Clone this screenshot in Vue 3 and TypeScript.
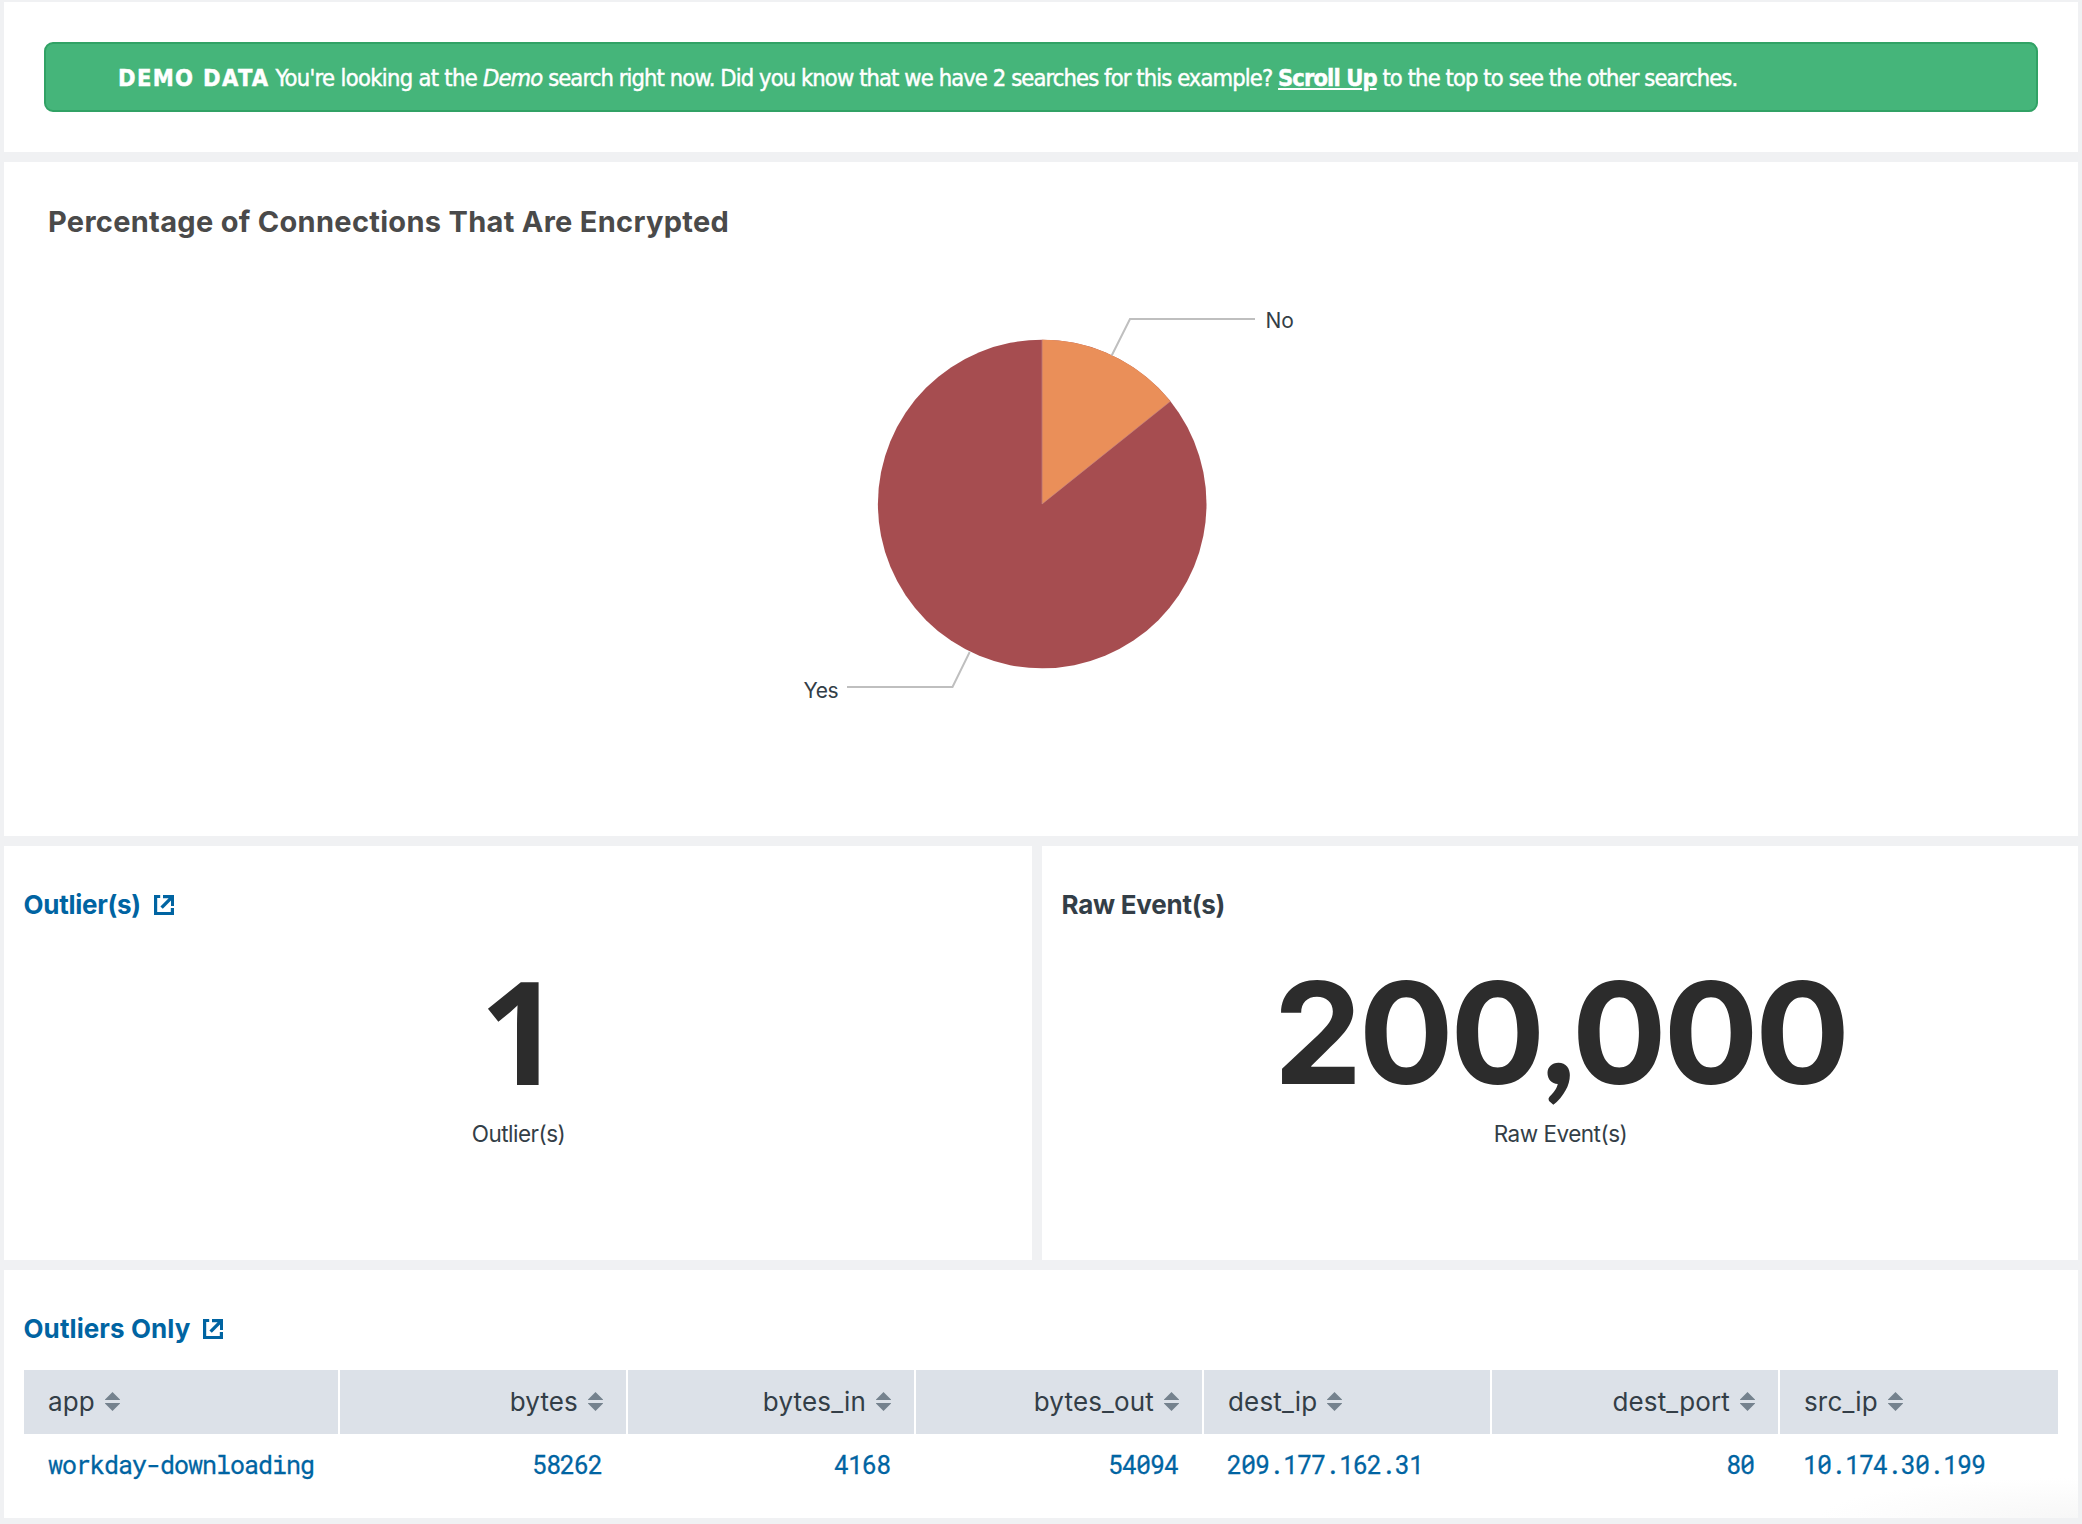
<script setup lang="ts">
interface Column {
  name: string
  value: string
  width: number
  numeric: boolean
}

const columns: Column[] = [
  { name: 'app', value: 'workday-downloading', width: 316, numeric: false },
  { name: 'bytes', value: '58262', width: 288, numeric: true },
  { name: 'bytes_in', value: '4168', width: 288, numeric: true },
  { name: 'bytes_out', value: '54094', width: 288, numeric: true },
  { name: 'dest_ip', value: '209.177.162.31', width: 288, numeric: false },
  { name: 'dest_port', value: '80', width: 288, numeric: true },
  { name: 'src_ip', value: '10.174.30.199', width: 278, numeric: false },
]
</script>

<template>
  <main class="dashboard">
    <section class="panel banner-panel">
      <div class="banner">
        <p class="banner-text"><strong class="tag">DEMO DATA</strong> <span class="lead">You're looking at the </span><em>Demo</em> <span class="body">search right now. Did you know that we have 2 searches for this example? </span><a class="scroll">Scroll Up</a><span class="body"> to the top to see the other searches.</span></p>
      </div>
    </section>

    <section class="panel chart-panel">
      <h2 class="chart-title">Percentage of Connections That Are Encrypted</h2>
      <svg class="pie" viewBox="4 262 2074 574">
        <circle cx="1042.2" cy="504" r="164.3" fill="#a64d50" />
        <path d="M1042.2 504V339.7A164.3 164.3 0 0 1 1170.4 401.3Z" fill="#ea8f59" />
        <path d="M1042 340V504L1170.4 401.3" fill="none" stroke="#c58a8c" stroke-width="0.6" />
        <path d="M1111.7 355.5L1130 319H1255M969.7 652L952.5 687H847" fill="none" stroke="#bfbfbf" stroke-width="2" />
        <text x="1265.5" y="328">No</text>
        <text x="803.5" y="698" letter-spacing="-0.5">Yes</text>
      </svg>
    </section>

    <div class="row">
      <section class="panel single outliers">
        <h3 class="heading link">
          <span class="t-outliers">Outlier(s)</span>
          <svg class="ext" viewBox="0 0 20 20"><path d="M6.2 0H0V20H20V13H16.8V17H3.2V3H6.2ZM9 0H20V11H17V5.6L8.8 13.8L6.4 11.4L14.6 3.2H9Z" /></svg>
        </h3>
        <div class="number one">1</div>
        <div class="caption">Outlier(s)</div>
      </section>
      <section class="panel single events">
        <h3 class="heading"><span class="t-raw">Raw Event(s)</span></h3>
        <div class="number">200<span class="comma">,</span>000</div>
        <div class="caption">Raw Event(s)</div>
      </section>
    </div>

    <section class="panel table-panel">
      <h3 class="heading link">
        <span class="t-only">Outliers Only</span>
        <svg class="ext" viewBox="0 0 20 20"><path d="M6.2 0H0V20H20V13H16.8V17H3.2V3H6.2ZM9 0H20V11H17V5.6L8.8 13.8L6.4 11.4L14.6 3.2H9Z" /></svg>
      </h3>
      <table class="results">
        <colgroup>
          <col v-for="c in columns" :key="c.name" :style="{ width: c.width + 'px' }" />
        </colgroup>
        <thead>
          <tr>
            <th v-for="c in columns" :key="c.name" :class="{ numeric: c.numeric }">
              <div class="th">
                <span class="name">{{ c.name }}</span>
                <svg class="sort" viewBox="0 0 15 19"><path d="M7.5 0L15 7.5V8H0V7.5ZM0 11H15V11.5L7.5 19L0 11.5Z" /></svg>
              </div>
            </th>
          </tr>
        </thead>
        <tbody>
          <tr>
            <td v-for="c in columns" :key="c.name" :class="{ numeric: c.numeric }">{{ c.value }}</td>
          </tr>
        </tbody>
      </table>
    </section>
  </main>
</template>

<style>
body {
  background: #f0f1f3;
}
</style>

<style scoped>
.dashboard {
  box-sizing: border-box;
  width: 2082px;
  height: 1524px;
  padding: 2px 4px 6px;
  display: flex;
  flex-direction: column;
  gap: 10px;
  overflow: hidden;
  background: #f0f1f3;
  font-family: Inter, Roboto, sans-serif;
  color: #333e47;
}

.panel {
  box-sizing: border-box;
  background: #fff;
}

.banner-panel {
  height: 150px;
  padding: 40px;
}

.banner {
  box-sizing: border-box;
  height: 70px;
  padding: 0 72px;
  border: 2px solid #31a265;
  border-radius: 9px;
  background: #45b57a;
}

.banner-text {
  margin: 0;
  font: 23.5px/68px 'DejaVu Sans Condensed', 'DejaVu Sans', sans-serif;
  letter-spacing: -0.89px;
  white-space: pre;
  color: #fff;
  -webkit-text-stroke: 0.45px #fff;
}

.tag {
  letter-spacing: 1.35px;
}

.lead {
  letter-spacing: -0.68px;
}

.scroll {
  font-weight: 700;
  letter-spacing: -0.92px;
  text-decoration: underline;
  text-decoration-thickness: 2px;
  text-underline-offset: 2px;
}

.chart-panel {
  height: 674px;
}

.chart-title {
  box-sizing: border-box;
  height: 100px;
  margin: 0;
  padding: 40px 44px 0;
  font-size: 29px;
  line-height: 40px;
  letter-spacing: 0.3px;
  color: #4a4a4a;
}

.pie {
  display: block;
  width: 2074px;
  height: 574px;
  font-size: 21px;
  fill: #333e47;
}

.row {
  display: flex;
  gap: 10px;
  height: 414px;
}

.single {
  padding-top: 39px;
}

.outliers {
  width: 1028px;
}

.events {
  width: 1036px;
}

.heading {
  display: flex;
  align-items: center;
  gap: 13px;
  margin: 0;
  padding-left: 19.5px;
  font-size: 26px;
  line-height: 40px;
  white-space: nowrap;
}

.link {
  color: #0064a2;
}

.t-outliers {
  letter-spacing: -0.28px;
}

.t-raw {
  letter-spacing: -0.25px;
}

.t-only {
  letter-spacing: 0.08px;
}

.ext {
  width: 20px;
  height: 20px;
  fill: #0064a2;
}

.number {
  height: 160px;
  margin-top: 25px;
  font-size: 141px;
  font-weight: 700;
  line-height: 160px;
  letter-spacing: -3.5px;
  text-align: center;
  color: #2c2c2c;
}

.one {
  padding-left: 5px;
  font-family: 'Open Sans', sans-serif;
  font-size: 143px;
  letter-spacing: 0;
}

.comma {
  font-family: Lato, sans-serif;
  font-weight: 900;
}

.caption {
  margin-top: 4px;
  padding-left: 1px;
  font-size: 22.5px;
  line-height: 40px;
  letter-spacing: -0.5px;
  text-align: center;
}

.table-panel {
  height: 248px;
  padding-top: 39px;
  background: radial-gradient(ellipse 260px 40px at 100% 100%, #f7f7f7, #fff);
}

.results {
  width: 2034px;
  margin: 21px 0 0 20px;
  border-collapse: separate;
  border-spacing: 0;
  table-layout: fixed;
}

.results th {
  box-sizing: border-box;
  height: 64px;
  padding: 0 24px 2px;
  border-right: 2px solid #fff;
  background: #dce1e8;
  font-size: 26px;
  font-weight: 400;
}

.results th.numeric {
  padding-right: 23px;
}

.results th:last-child {
  border-right: 0;
}

.th {
  display: flex;
  align-items: center;
  gap: 10px;
}

.name {
  letter-spacing: 0.15px;
}

.numeric .th {
  justify-content: flex-end;
}

.sort {
  width: 15px;
  height: 19px;
  fill: #75828e;
}

.results td {
  height: 62px;
  padding: 0 26px 0 23px;
  font: 25px/62px 'Roboto Mono', 'DejaVu Sans Mono', monospace;
  letter-spacing: -1px;
  white-space: nowrap;
  color: #0064a2;
  -webkit-text-stroke: 0.3px #0064a2;
}

.results td:first-child {
  padding: 0 0 0 24px;
}

.results td.numeric {
  text-align: right;
}
</style>
